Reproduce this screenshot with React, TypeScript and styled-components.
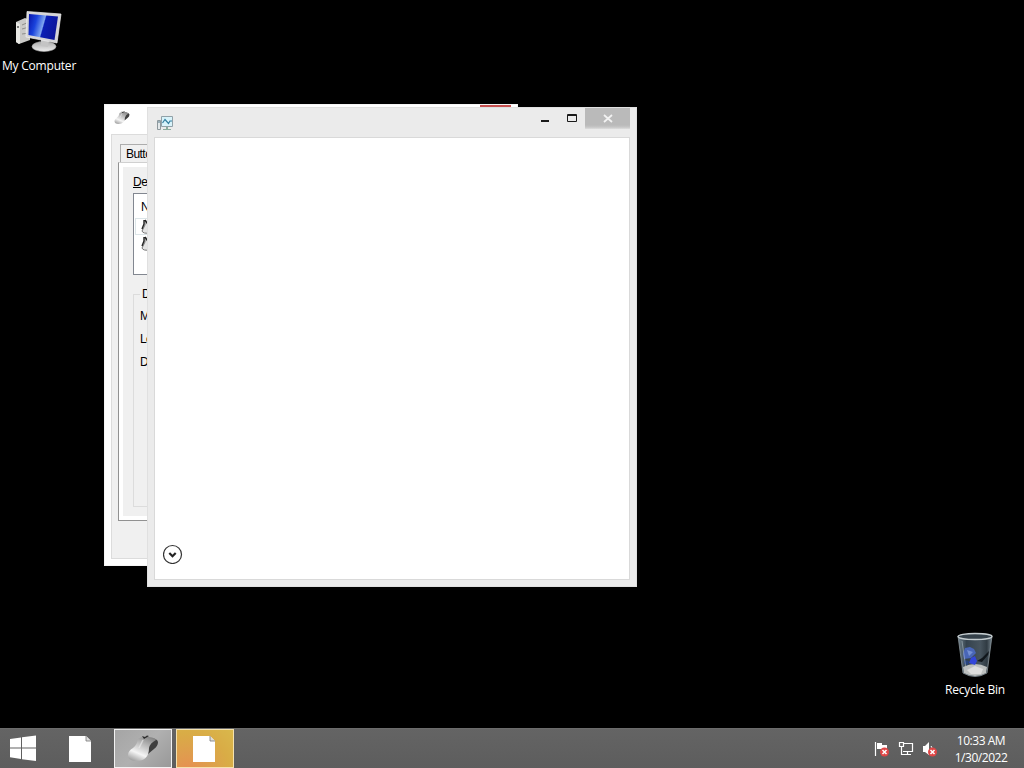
import React from "react";
import styled, { createGlobalStyle } from "styled-components";

const Global = createGlobalStyle`
  * { box-sizing: border-box; }
  body { margin: 0; background: #000; overflow: hidden; }
`;

const Screen = styled.div`
  width: 1024px;
  height: 768px;
  display: flex;
  flex-direction: column;
  background: #000;
  font-family: "Open Sans", "Noto Sans", sans-serif;
  font-size: 12px;
`;

const Desktop = styled.main`
  position: relative;
  flex: 1;
`;

const Shortcut = styled.div<{ $x: number; $y: number; $spacing: number; $gap: number }>`
  position: absolute;
  left: ${(p) => p.$x}px;
  top: ${(p) => p.$y}px;
  width: 90px;
  display: flex;
  flex-direction: column;
  align-items: center;
  gap: ${(p) => p.$gap}px;
  color: #fff;
  line-height: 16px;
  letter-spacing: ${(p) => p.$spacing}px;
  white-space: nowrap;
  svg { display: block; }
`;

const Window = styled.section<{ $x: number; $y: number; $w: number; $h: number; $active?: boolean }>`
  position: absolute;
  left: ${(p) => p.$x}px;
  top: ${(p) => p.$y}px;
  width: ${(p) => p.$w}px;
  height: ${(p) => p.$h}px;
  display: flex;
  flex-direction: column;
  overflow: hidden;
  padding: 0 6px 6px;
  background: ${(p) => (p.$active ? "#ebebeb" : "#fff")};
  border: 1px solid ${(p) => (p.$active ? "#e0e0e0" : "#f5f5f5")};
`;

const TitleBar = styled.header`
  height: 29px;
  flex: none;
  display: flex;
  align-items: flex-start;
  svg { display: block; }
`;

const Spacer = styled.div`
  flex: 1;
`;

const AppIcon = styled.span<{ $top: number; $left: number }>`
  padding: ${(p) => p.$top}px 0 0 ${(p) => p.$left}px;
`;

const Caption = styled.span<{ $w: number }>`
  width: ${(p) => p.$w}px;
  height: 21px;
  display: flex;
`;

const CloseButton = styled(Caption)`
  background: linear-gradient(#bababa 0 17px, #c5c5c5 19px, #dedede);
`;

const RedClose = styled.span`
  width: 31px;
  height: 20px;
  background: #c75050;
`;

const Canvas = styled.div`
  flex: 1;
  display: flex;
  align-items: flex-end;
  padding: 0 0 15px 8px;
  background: #fff;
  border: 1px solid #d9d9d9;
  svg { display: block; }
`;

const Dialog = styled.div`
  flex: 1;
  display: flex;
  flex-direction: column;
  padding: 9px 6px 37px;
  background: #f0f0f0;
  border: 1px solid #dcdcdc;
  color: #000;
  font-family: "Liberation Sans", Arial, sans-serif;
  font-size: 12px;
  line-height: 14px;
`;

const Tab = styled.div`
  width: 60px;
  height: 18px;
  margin-left: 2px;
  padding: 2px 0 0 5px;
  border: 1px solid #adadad;
  border-bottom: 0;
  letter-spacing: -0.55px;
`;

const TabPage = styled.div`
  flex: 1;
  display: flex;
  flex-direction: column;
  border: 1px solid #919191;
  border-top-color: #d0d0d0;
  box-shadow: inset 0 0 0 4px #fff;
  padding: 12px 14px 13px;
`;

const Label = styled.div`
  height: 18px;
  letter-spacing: -0.4px;
`;

const DeviceList = styled.div`
  height: 82px;
  background: #fff;
  border: 1px solid #828790;
  padding: 6px 0 0 1px;
`;

const ListHeader = styled.div`
  height: 18px;
  padding-left: 6px;
`;

const ListRow = styled.div<{ $selected?: boolean }>`
  height: 17px;
  padding-left: 4px;
  border: 1px solid ${(p) => (p.$selected ? "#dce5e8" : "transparent")};
  svg { display: block; }
`;

const Group = styled.fieldset`
  flex: 1;
  margin: 12px 0 0;
  padding: 0 0 0 6px;
  border: 1px solid #dcdcdc;
  min-width: 0;
`;

const Legend = styled.legend`
  padding: 0 3px 0 2px;
`;

const GroupRow = styled.div`
  height: 23px;
  padding-top: 1px;
  letter-spacing: -0.6px;
  &:first-of-type { margin-top: 7px; }
`;

const Taskbar = styled.footer`
  height: 40px;
  display: flex;
  background: linear-gradient(#646464, #5d5d5d);
  border-top: 1px solid #6b6b6b;
  svg { display: block; }
`;

const TaskButton = styled.div<{ $w: number; $look?: "gray" | "orange" }>`
  width: ${(p) => p.$w}px;
  height: 39px;
  display: flex;
  align-items: center;
  justify-content: center;
  margin-right: ${(p) => (p.$look ? 4 : 0)}px;
  border: 1px solid ${(p) => (p.$look === "gray" ? "#f2f2f2" : p.$look ? "#f5e2ae" : "transparent")};
  background: ${(p) =>
    p.$look === "gray"
      ? "linear-gradient(135deg, #a5a5a5, #b0b0b0 50%, #999)"
      : p.$look === "orange"
      ? "radial-gradient(ellipse at 20% 110%, #e78f51 0, #df9d4e 30%, #d9ac46 65%, #d9b84c 100%)"
      : "transparent"};
`;

const Tray = styled.div`
  display: flex;
  align-items: center;
  gap: 8px;
  margin-right: 15px;
`;

const Clock = styled.div`
  width: 56px;
  margin-right: 15px;
  padding-top: 3px;
  color: #fff;
  text-align: center;
  line-height: 17px;
  letter-spacing: -0.46px;
  white-space: nowrap;
`;

const ComputerIcon = () => (
  <svg width="48" height="46" viewBox="0 0 48 46">
    <defs>
      <linearGradient id="screen" x1="0" y1="0" x2="1" y2="0.25">
        <stop offset="0" stopColor="#0712a8" />
        <stop offset=".3" stopColor="#1a43dc" />
        <stop offset=".56" stopColor="#7fa6f0" />
        <stop offset=".6" stopColor="#0a1eb5" />
        <stop offset="1" stopColor="#0b169c" />
      </linearGradient>
      <linearGradient id="base" x1="0" y1="0" x2="0" y2="1">
        <stop offset="0" stopColor="#aaa" />
        <stop offset="1" stopColor="#eee" />
      </linearGradient>
    </defs>
    <path d="M1 12 10 8 15 10 15 30 4 34 1 32Z" fill="#c9c9c7" />
    <path d="M1 12 5 14 5 33 4 34 1 32Z" fill="#e8e8e4" />
    <path d="M7 15 14 12M7 19 14 17M7 24 14 23" stroke="#8e8e8c" />
    <circle cx="3" cy="17" r="1" fill="#555" />
    <ellipse cx="29" cy="36.5" rx="12" ry="5" fill="url(#base)" stroke="#aaa" strokeWidth=".6" />
    <path d="M26 29 34 30 33 37 26 36Z" fill="#c4c4c4" />
    <path d="M12 1.5 46 4 42 33 11 27Z" fill="#d4d4d6" stroke="#f0f0f0" strokeWidth=".7" />
    <path d="M14 4 43 6.5 39.5 30 13.5 25Z" fill="url(#screen)" />
  </svg>
);

const BinIcon = () => (
  <svg width="40" height="46" viewBox="0 0 40 46">
    <defs>
      <linearGradient id="glass" x1="0" y1="0" x2="1" y2="0">
        <stop offset="0" stopColor="#71828c" />
        <stop offset=".25" stopColor="#34424d" />
        <stop offset=".65" stopColor="#47545e" />
        <stop offset=".85" stopColor="#303b43" />
        <stop offset="1" stopColor="#77858e" />
      </linearGradient>
    </defs>
    <path d="M3 4 37 4 32 41Q20 48 8 41Z" fill="url(#glass)" stroke="#89949a" strokeWidth=".8" />
    <path d="M8 35Q20 29 32 35L31 41Q20 47 9 41Z" fill="#bdc0bf" />
    <path d="M12 38 20 34 28 37 26 42 16 42Z" fill="#ddd" />
    <path d="M8 22 10 16 15 15 19 17 21 21 16 26 9 27Z" fill="#4966b7" />
    <path d="M12 18 18 20 14 24Z" fill="#7590d4" />
    <path d="M16 26 20 24 22 29 20 33 14 31Z" fill="#3346d9" />
    <path d="M9 28 14 29 13 33 9 32Z" fill="#284580" />
    <path d="M34 19 27 26 22 29 27 30 33 23" fill="#10161b" />
    <ellipse cx="20" cy="4.5" rx="17" ry="3" fill="#35414a" stroke="#c5cdd0" strokeWidth="1.3" />
    <path d="M7 9 11 37" stroke="#b9c7ce" opacity=".5" />
  </svg>
);

const MouseIcon = ({ size }: { size: number }) => (
  <svg width={size} height={(size * 28) / 32} viewBox="0 0 32 28">
    <defs>
      <linearGradient id={`mouse${size}`} x1=".75" y1="0" x2=".25" y2="1">
        <stop offset="0" stopColor="#858585" />
        <stop offset=".35" stopColor="#bdbdbd" />
        <stop offset=".7" stopColor="#f5f5f5" />
        <stop offset="1" stopColor="#a5a5a5" />
      </linearGradient>
    </defs>
    <path d="M20 4Q30 2 31 7Q31 11 27 14L21 19 18 12Z" fill="#3f3f3f" />
    <path d="M11 4Q15 1 22 2Q29 3 29 5Q23 8 22 13Q22 26 9 26Q1 26 1 20Q1 16 6 13Q10 10 11 4Z" fill={`url(#mouse${size})`} />
    <path d="M15 1 17 4 22 1 20 .5 18 2Z" fill="#2c2c2c" />
    <path d="M16 5Q14 9 12 13" stroke="#eee" strokeWidth="1.6" fill="none" opacity=".6" />
  </svg>
);

const ListMouse = () => (
  <svg width="16" height="16" viewBox="0 0 16 16">
    <path d="M5 1 5 6 2 12Q3 15 10 14L12 5 9 1" fill="#e4e4e4" stroke="#777" strokeWidth="1" />
    <path d="M4 1 4 5 2 10M5 1 7 4 10 0" stroke="#222" strokeWidth="1.4" fill="none" />
  </svg>
);

const MonitorIcon = () => (
  <svg width="17" height="16" viewBox="0 0 17 16">
    <path d="M.5 5.5H3.5V14.5H.5Z" fill="#e3e8ea" stroke="#8d989d" />
    <path d="M1 7H3" stroke="#557686" />
    <path d="M4.5 1.5H15.5V11.5H4.5Z" fill="#d8f3fa" stroke="#91a1a8" />
    <path d="M5.5 8 8 4.5 11.5 8.5 13 6 15 6" fill="none" stroke="#347fa0" strokeWidth="1.2" />
    <path d="M9 12H11V14H14V15H6V14H9Z" fill="#8aab9d" />
  </svg>
);

const PageIcon = () => (
  <svg width="26" height="28" viewBox="0 0 26 28">
    <path d="M1 1H18L23 6V27H1Z" fill="#fff" />
    <path d="M18 1V6H23" fill="#ddd" stroke="#777" strokeWidth=".8" />
  </svg>
);

const WindowsLogo = () => (
  <svg width="28" height="27" viewBox="0 0 28 27">
    <path d="M0 4 11 2.4V12.5H0ZM12 2.2 26 .5V12.5H12ZM0 13.5H11V24L0 22.3ZM12 13.5H26V26L12 24.2Z" fill="#fff" />
  </svg>
);

const ErrorBadge = () => (
  <g>
    <circle cx="10.5" cy="11" r="4.5" fill="#df4646" />
    <path d="M8.5 9 12.5 13M12.5 9 8.5 13" stroke="#fff" strokeWidth="1.5" />
  </g>
);

const FlagIcon = () => (
  <svg width="16" height="16" viewBox="0 0 16 16">
    <path d="M1.5 1V15" stroke="#fff" strokeWidth="1.2" />
    <path d="M3 2H8V4H13V10H7V8H3Z" fill="#fff" />
    <ErrorBadge />
  </svg>
);

const NetworkIcon = () => (
  <svg width="16" height="16" viewBox="0 0 16 16">
    <path d="M6 2.5H14.5V10.5H5M9.5 11V13M6 13.5H13" fill="none" stroke="#fff" strokeWidth="1.2" />
    <path d="M3.5 6V13.5H6" fill="none" stroke="#fff" strokeWidth="1.2" />
    <path d="M1.5 1.5H5.5V5.5H1.5Z" fill="#686868" stroke="#fff" strokeWidth="1.2" />
  </svg>
);

const SpeakerIcon = () => (
  <svg width="16" height="16" viewBox="0 0 16 16">
    <path d="M1 5H3L7 1V14L3 11H1Z" fill="#fff" />
    <path d="M9 5Q10 6 10 8" fill="none" stroke="#fff" />
    <ErrorBadge />
  </svg>
);

export default function App() {
  return (
    <>
      <Global />
      <Screen>
        <Desktop>
          <Shortcut $x={-6} $y={10} $spacing={-0.2} $gap={2}>
            <ComputerIcon />
            My Computer
          </Shortcut>

          <Window $x={104} $y={104} $w={414} $h={462}>
            <TitleBar>
              <AppIcon $top={6} $left={3}><MouseIcon size={16} /></AppIcon>
              <Spacer />
              <RedClose />
            </TitleBar>
            <Dialog>
              <Tab>Buttons</Tab>
              <TabPage>
                <Label><u>D</u>evices:</Label>
                <DeviceList>
                  <ListHeader>Name</ListHeader>
                  <ListRow $selected><ListMouse /></ListRow>
                  <ListRow><ListMouse /></ListRow>
                </DeviceList>
                <Group>
                  <Legend>Device</Legend>
                  <GroupRow>Manufacturer:</GroupRow>
                  <GroupRow>Location:</GroupRow>
                  <GroupRow>Device Status:</GroupRow>
                </Group>
              </TabPage>
            </Dialog>
          </Window>

          <Window $x={147} $y={107} $w={490} $h={480} $active>
            <TitleBar>
              <AppIcon $top={7} $left={3}><MonitorIcon /></AppIcon>
              <Spacer />
              <Caption $w={27}>
                <svg width="27" height="21"><path d="M5 12H13V14H5Z" fill="#1a1a1a" /></svg>
              </Caption>
              <Caption $w={22}>
                <svg width="22" height="21"><path d="M4.5 6.5H13.5V13.5H4.5ZM4 7.5H14" fill="none" stroke="#1a1a1a" /></svg>
              </Caption>
              <CloseButton $w={45}>
                <svg width="45" height="21"><path d="M19 7 27 14M27 7 19 14" stroke="#f2f2f2" strokeWidth="1.8" /></svg>
              </CloseButton>
            </TitleBar>
            <Canvas>
              <svg width="20" height="20" viewBox="0 0 20 20">
                <circle cx="9.5" cy="10.5" r="9" fill="#fff" stroke="#333" strokeWidth="1.2" />
                <path d="M6.3 9 9.5 12.2 12.7 9" fill="none" stroke="#222" strokeWidth="2.2" />
              </svg>
            </Canvas>
          </Window>

          <Shortcut $x={930} $y={632} $spacing={-0.25} $gap={4}>
            <BinIcon />
            Recycle Bin
          </Shortcut>
        </Desktop>

        <Taskbar>
          <TaskButton $w={48}><WindowsLogo /></TaskButton>
          <TaskButton $w={66}><PageIcon /></TaskButton>
          <TaskButton $w={58} $look="gray"><MouseIcon size={32} /></TaskButton>
          <TaskButton $w={58} $look="orange"><PageIcon /></TaskButton>
          <Spacer />
          <Tray>
            <FlagIcon />
            <NetworkIcon />
            <SpeakerIcon />
          </Tray>
          <Clock>10:33 AM<br />1/30/2022</Clock>
        </Taskbar>
      </Screen>
    </>
  );
}
